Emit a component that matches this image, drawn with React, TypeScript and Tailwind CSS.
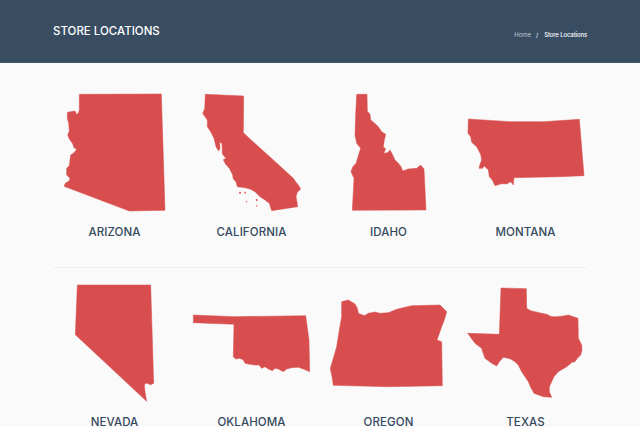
type State = {
  name: string;
  // crop origin the outline was traced against, traced at 3x
  ox: number;
  oy: number;
  points: string;
  dots?: [number, number, number][];
};

const CARD_W = 137;
const CARD_H = 130;

const topRow: State[] = [
  {
    name: 'ARIZONA',
    ox: 50,
    oy: 85,
    points:
      '88,28 334,27 345,376 238,378 42,304 46,295 58,287 60,280 50,270 50,250 58,242 60,225 62,210 72,203 80,193 72,188 68,176 58,162 53,150 58,138 56,115 52,100 52,82 62,80 75,78 80,88 85,85 88,75',
  },
  {
    name: 'CALIFORNIA',
    ox: 190,
    oy: 85,
    points:
      '46,28 161,33 160,143 200,180 250,225 310,280 318,292 325,300 332,312 322,322 318,335 320,345 323,365 245,377 238,355 225,345 210,335 195,320 180,312 165,308 142,305 138,290 130,282 128,270 118,250 107,238 100,224 108,220 97,207 96,175 89,172 90,190 86,198 78,185 72,160 62,140 52,125 52,105 38,85 44,72 45,50',
    dots: [
      [150, 323, 3],
      [165, 323, 2.5],
      [170, 350, 2],
      [200, 345, 3],
      [200, 363, 2],
    ],
  },
  {
    name: 'IDAHO',
    ox: 340,
    oy: 85,
    points:
      '50,28 81,28 82,78 90,88 92,105 104,115 115,125 125,140 137,148 133,165 130,185 137,192 131,205 143,203 150,195 158,210 165,225 175,235 183,245 188,258 205,252 230,250 242,240 252,252 258,375 37,376 42,280 33,260 38,246 48,235 62,190 50,175 45,150 47,90',
  },
  {
    name: 'MONTANA',
    ox: 460,
    oy: 105,
    points:
      '25,42 150,50 250,50 358,43 372,212 300,215 220,217 162,218 160,240 152,230 140,237 125,236 105,242 97,225 88,215 85,195 72,182 68,190 57,190 60,178 65,165 62,148 50,125 35,112 32,95 24,85',
  },
];

const bottomRow: State[] = [
  {
    name: 'NEVADA',
    ox: 60,
    oy: 260,
    points: '52,75 272,75 281,370 272,374 258,369 253,375 255,395 260,424 46,224',
  },
  {
    name: 'OKLAHOMA',
    ox: 185,
    oy: 305,
    points:
      '25,30 150,35 362,32 372,105 374,200 355,192 340,187 320,188 305,192 295,200 280,192 270,190 262,197 250,192 240,185 230,190 222,180 210,180 195,178 180,175 175,165 165,160 152,162 145,155 147,58 25,53',
  },
  {
    name: 'OREGON',
    ox: 325,
    oy: 290,
    points:
      '50,35 70,30 90,42 97,55 100,70 118,77 130,70 150,66 165,70 190,68 215,58 260,47 345,45 365,65 358,90 350,110 336,150 350,155 352,287 190,290 25,286 21,260 16,235 25,205 35,170 43,120 50,80',
  },
  {
    name: 'TEXAS',
    ox: 460,
    oy: 280,
    points:
      '123,24 199,26 200,85 212,92 225,95 245,100 260,103 275,110 290,110 310,108 325,105 354,115 355,175 365,195 366,210 362,225 352,235 345,245 335,247 340,234 333,250 320,260 295,275 282,290 275,305 268,320 268,335 275,352 250,350 222,340 212,322 205,305 195,290 185,275 175,255 165,245 150,236 130,232 118,245 110,258 95,250 75,235 68,215 65,205 45,190 23,160 118,163',
  },
];

function StateCard({ state, index, top }: { state: State; index: number; top: number }) {
  const left = 46 + index * CARD_W;
  const vx = (left - state.ox) * 3;
  const vy = (top - state.oy) * 3;
  return (
    <div className="flex flex-col items-center">
      <svg
        className="block w-[137px] h-[130px]"
        viewBox={`${vx} ${vy} ${CARD_W * 3} ${CARD_H * 3}`}
      >
        <polygon
          points={state.points}
          fill="#d84e4e"
          stroke="#d84e4e"
          strokeWidth={1.5}
          strokeLinejoin="round"
        />
        {state.dots?.map(([cx, cy, r]) => (
          <circle key={`${cx}-${cy}`} cx={cx} cy={cy} r={r} fill="#d84e4e" />
        ))}
      </svg>
      <h3 className="mt-[4px] text-[11.5px] leading-5 font-medium tracking-[0.1px] text-[#34495e]">
        {state.name}
      </h3>
    </div>
  );
}

export default function App() {
  return (
    <div className="h-[427px] overflow-hidden bg-[#fafafa] font-['Inter',sans-serif]">
      <header className="h-[63px] bg-[#394d62] border-b border-[#44586c] px-[53px] flex items-center justify-between">
        <h1 className="mt-[1px] text-[11.5px] font-medium text-white">STORE LOCATIONS</h1>
        <nav className="flex items-center text-[6px] mt-[7px]">
          <span className="text-[#c3ccd4]">Home</span>
          <span className="ml-[5px] mr-[6px] text-white">/</span>
          <span className="text-white font-medium tracking-[-0.13px]">Store Locations</span>
        </nav>
      </header>

      <main className="w-[548px] mx-auto pt-[25px]">
        <div className="grid grid-cols-4">
          {topRow.map((s, i) => (
            <StateCard key={s.name} state={s} index={i} top={88} />
          ))}
        </div>
        <div className="mx-[7px] mt-[25px] mb-[10px] border-t border-[#f0f0f0]" />
        <div className="grid grid-cols-4">
          {bottomRow.map((s, i) => (
            <StateCard key={s.name} state={s} index={i} top={278} />
          ))}
        </div>
      </main>
    </div>
  );
}
